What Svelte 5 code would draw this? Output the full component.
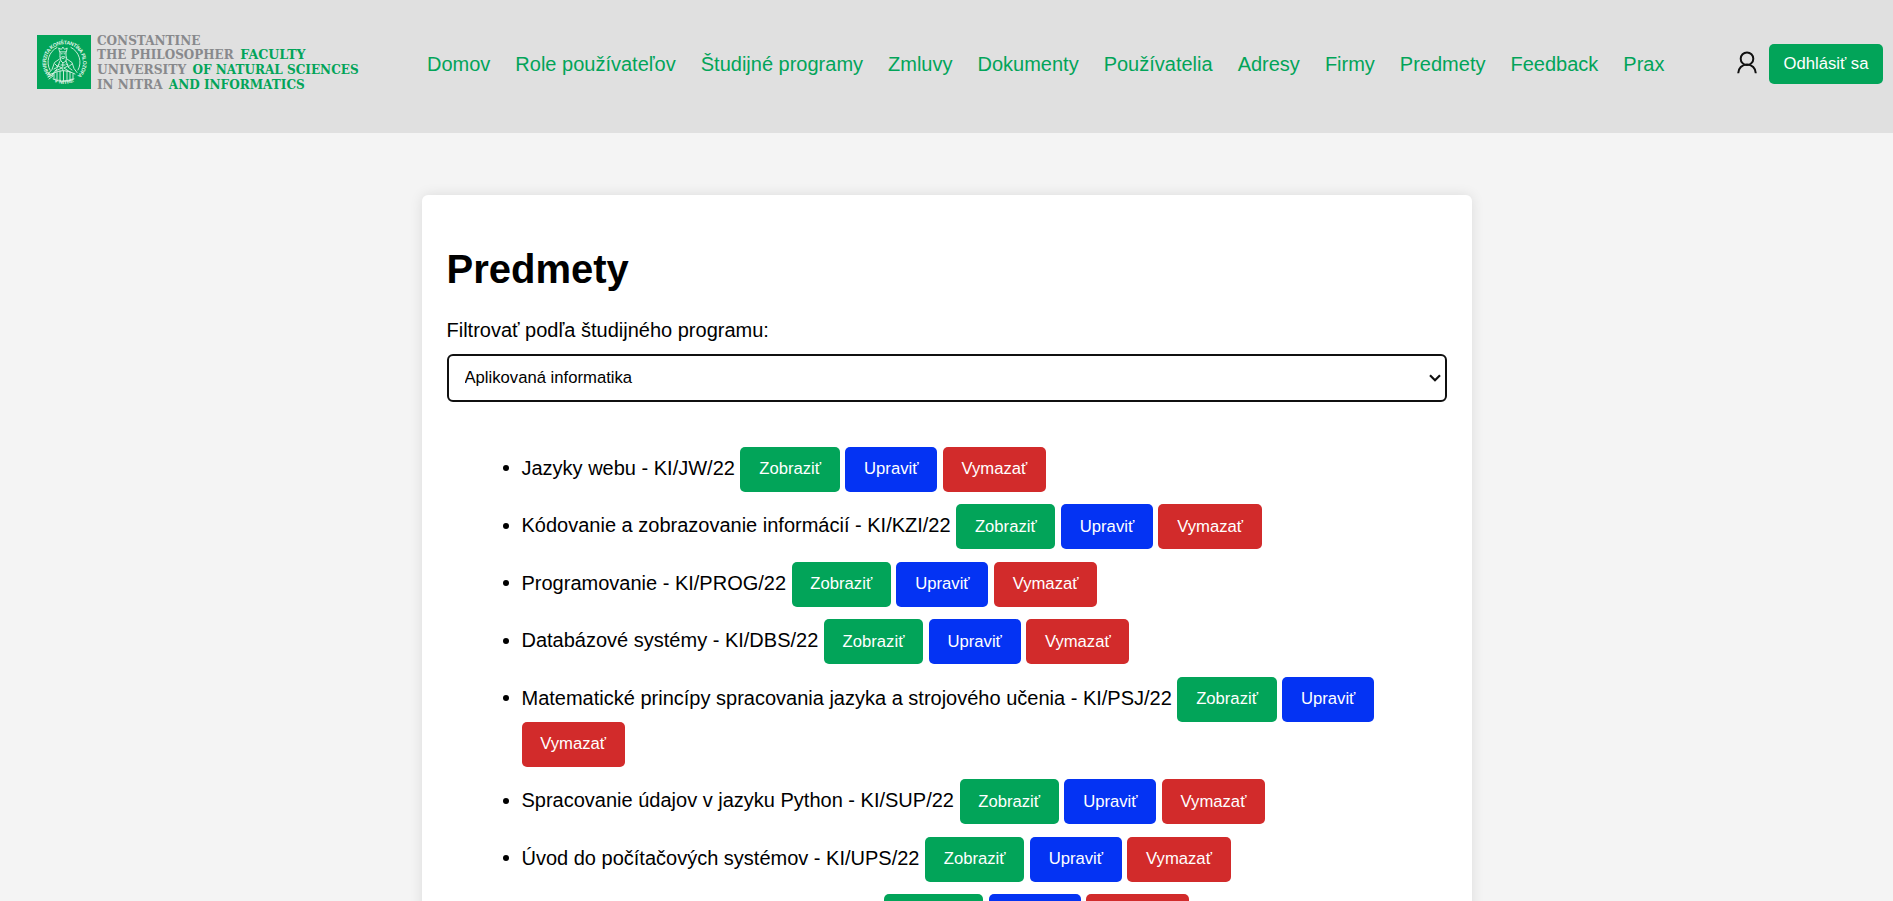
<script>
  const links = ['Domov', 'Role používateľov', 'Študijné programy', 'Zmluvy', 'Dokumenty', 'Používatelia', 'Adresy', 'Firmy', 'Predmety', 'Feedback', 'Prax'];
  const subjects = [
    'Jazyky webu - KI/JW/22',
    'Kódovanie a zobrazovanie informácií - KI/KZI/22',
    'Programovanie - KI/PROG/22',
    'Databázové systémy - KI/DBS/22',
    'Matematické princípy spracovania jazyka a strojového učenia - KI/PSJ/22',
    'Spracovanie údajov v jazyku Python - KI/SUP/22',
    'Úvod do počítačových systémov - KI/UPS/22',
    'Operačné systémy a siete - KI/OSAS/22'
  ];
</script>

<header>
  <svg class="logo" width="324" height="56" viewBox="0 0 324 56">
    <rect x="0" y="0" width="54" height="54" fill="#02a459" />
    <defs>
      <path id="ring" d="M14.2 40.3 A18.4 18.4 0 1 1 40.8 40.3" />
      <path id="base" d="M11.5 42.5 A21.8 21.8 0 0 0 42.5 42.5" />
    </defs>
    <g class="seal">
      <text><textPath href="#ring" textLength="86">UNIVERZITA KONŠTANTÍNA FILOZOFA</textPath></text>
      <text><textPath href="#base" startOffset="50%" text-anchor="middle">V NITRE</textPath></text>
    </g>
    <g fill="none" stroke="#dcf3e7" stroke-width=".9" stroke-linecap="round" stroke-linejoin="round">
      <path d="M20 12.5A16.2 16.2 0 0 0 13 35M34 12.5A16.2 16.2 0 0 1 41 35" />
      <path d="M22.5 16.5l-.8-3.5 2.6 1.4 1.6-2.3 1.7 2.3 2.6-1.4-.8 3.5zM23 17v4.5q3 4 6 0V17M24.2 18.8h1M27 18.8h1M25 21.7h2.4M23 22l1 4 2 2 3-2 .5-4" />
      <path d="M22.5 24l-5 3.5-2.5 7-4 4.5M30 24l5 3.5 2 6 3 4M23 26l-2 5 4 2-7 3M29 26l2 5-4 2 6 4M18 29l3 3-4 2M35 29l-4 3 4 3M25.8 28v7M20 34l-5 6M15 39q11-7 23 0M17 39v5M20 37v8M23 36v10M26.5 36v10M30 36v10M33 37v8M36 39v5M16 44q10 5 21 0" />
      <path d="M11 40l6-2M11 42l5-2M12 44l4-3M20 31.5l2-2M31 30l-2-1M24 30h4" />
    </g>
    <g class="wordmark">
      <g fill="#88898c">
        <text x="60" y="9.5" textLength="103.4" lengthAdjust="spacingAndGlyphs">CONSTANTINE</text>
        <text x="60" y="24.1" textLength="136.6" lengthAdjust="spacingAndGlyphs">THE PHILOSOPHER</text>
        <text x="60" y="38.8" textLength="89.2" lengthAdjust="spacingAndGlyphs">UNIVERSITY</text>
        <text x="60" y="53.5" textLength="65.6" lengthAdjust="spacingAndGlyphs">IN NITRA</text>
      </g>
      <g fill="#02a459">
        <text x="203.2" y="24.1" textLength="65.4" lengthAdjust="spacingAndGlyphs">FACULTY</text>
        <text x="155.6" y="38.8" textLength="166" lengthAdjust="spacingAndGlyphs">OF NATURAL SCIENCES</text>
        <text x="131.8" y="53.5" textLength="136" lengthAdjust="spacingAndGlyphs">AND INFORMATICS</text>
      </g>
    </g>
  </svg>
  <nav>
    {#each links as link}<a href="#top">{link}</a>{/each}
  </nav>
  <div class="account">
    <svg width="20" height="23" viewBox="0 0 20 23" fill="none" stroke="#111" stroke-width="2">
      <circle cx="10" cy="7.7" r="6.3" />
      <path d="M1.2 22.3a8.8 8.8 0 0 1 17.6 0" stroke-linecap="butt" />
    </svg>
    <button class="logout">Odhlásiť sa</button>
  </div>
</header>

<main>
  <h1>Predmety</h1>
  <label for="program">Filtrovať podľa študijného programu:</label>
  <div class="select">
    <select id="program"><option>Aplikovaná informatika</option></select>
    <svg width="12" height="8" viewBox="0 0 12 8" fill="none" stroke="#101010" stroke-width="2.2"><path d="M1 1.2l5 5 5-5" /></svg>
  </div>
  <ul>
    {#each subjects as subject}
      <li>
        {subject}
        <button class="show">Zobraziť</button>
        <button class="edit">Upraviť</button>
        <button class="delete">Vymazať</button>
      </li>
    {/each}
  </ul>
</main>

<style>
  :global(html) { overflow: hidden; }
  :global(body) {
    margin: 0;
    height: 901px;
    overflow: hidden;
    background: #f4f4f4;
    color: #000;
    font: 20px "Liberation Sans", Arial, sans-serif;
  }
  header {
    box-sizing: border-box;
    height: 133px;
    display: flex;
    align-items: flex-start;
    padding: 35px 10px 0 37px;
    background: #e0e0e0;
  }
  .logo { flex: none; overflow: visible; }
  .wordmark { font: bold 13.3px "DejaVu Serif", serif; }
  .seal { font: bold 5.2px "Liberation Sans", sans-serif; fill: #e0f5ea; }
  nav { display: flex; gap: 25px; margin: 18px 0 0 66px; white-space: nowrap; }
  a { color: #02a459; text-decoration: none; }
  .account { display: flex; align-items: flex-start; margin: 9px 0 0 auto; }
  .account svg { margin: 7px 12px 0 0; }
  button {
    border: 0;
    border-radius: 5px;
    color: #fff;
    font: 16.667px "Liberation Sans", Arial, sans-serif;
    padding: 12.5px 18.75px;
    height: 45px;
  }
  .logout { width: 114px; height: 40px; padding: 0; background: #02a459; }
  main {
    width: 1000px;
    margin: 62px auto 0;
    padding: 25px;
    background: #fff;
    border-radius: 6px;
    box-shadow: 0 0 12.5px rgba(0, 0, 0, .1);
  }
  h1 { font-size: 40px; margin: 26.8px 0; line-height: 45px; }
  label { display: block; line-height: 23px; }
  .select { display: grid; align-items: center; margin: 12.4px 0 45px; }
  select {
    grid-area: 1 / 1;
    appearance: none;
    box-sizing: border-box;
    width: 100%;
    height: 48px;
    border: 2px solid #101010;
    border-radius: 6px;
    padding: 0 16px;
    background: #fff;
    color: #000;
    font: 16.667px "Liberation Sans", Arial, sans-serif;
  }
  .select svg { grid-area: 1 / 1; justify-self: end; margin-right: 6px; pointer-events: none; }
  ul { margin: 0; padding: 0 50px 0 75px; }
  li { margin-bottom: 12.5px; }
  .show { background: #02a459; }
  .edit { background: #0433f3; }
  .delete { background: #d22b2b; }
</style>
